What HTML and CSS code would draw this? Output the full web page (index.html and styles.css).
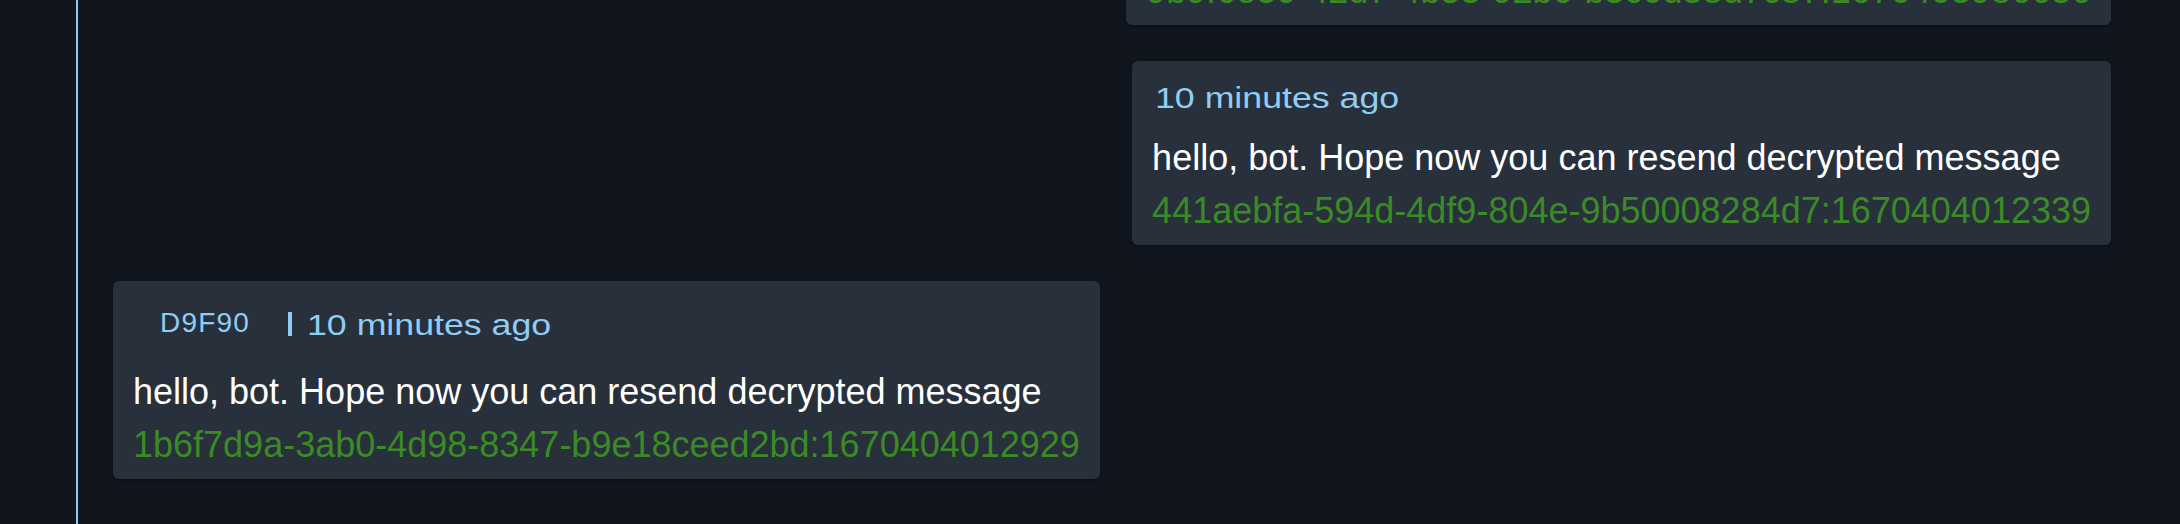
FILE: index.html
```html
<!DOCTYPE html>
<html lang="en">
<head>
<meta charset="utf-8">
<title>Chat</title>
<link rel="stylesheet" href="styles.css">
</head>
<body>
<main class="thread">
  <div class="msg msg-own">
    <div class="meta"><span class="time">10 minutes ago</span></div>
    <div class="text">hello, bot. Hope now you can resend decrypted message</div>
    <div class="hash">9b9f6e30-42d7-4b53-92b6-b5c0d38d7c87:1670403986636</div>
  </div>
  <div class="msg msg-own">
    <div class="meta"><span class="time">10 minutes ago</span></div>
    <div class="text">hello, bot. Hope now you can resend decrypted message</div>
    <div class="hash">441aebfa-594d-4df9-804e-9b50008284d7:1670404012339</div>
  </div>
  <div class="msg msg-other">
    <div class="meta meta-author">
      <span class="author">D9F90</span>
      <span class="sep" aria-hidden="true"></span>
      <span class="time">10 minutes ago</span>
    </div>
    <div class="text">hello, bot. Hope now you can resend decrypted message</div>
    <div class="hash">1b6f7d9a-3ab0-4d98-8347-b9e18ceed2bd:1670404012929</div>
  </div>
</main>
</body>
</html>
```

FILE: styles.css
```css
html, body {
  margin: 0;
  padding: 0;
  height: 100%;
  background: #11151e;
  overflow: hidden;
}

body {
  font-family: "Liberation Sans", Arial, sans-serif;
}

.thread {
  box-sizing: border-box;
  height: 100vh;
  margin-left: 76px;
  border-left: 2px solid #90cdf4;
  padding: 0 69px 45px 35px;
  display: flex;
  flex-direction: column;
  justify-content: flex-end;
  gap: 36px;
  overflow: hidden;
}

.msg {
  flex: none;
  width: fit-content;
  box-sizing: border-box;
  background: #28303c;
  border-radius: 6px;
  box-shadow: 0 1px 3px rgba(0, 0, 0, 0.35);
  padding: 19px 20px 14px 20px;
  white-space: nowrap;
}

.msg-own {
  align-self: flex-end;
}

.msg-other {
  align-self: flex-start;
}

.meta {
  display: flex;
  align-items: center;
  height: 35px;
  margin-bottom: 23px;
}

.meta-author {
  height: 49px;
}

.author {
  box-sizing: border-box;
  padding: 5px 0 9px 27px;
  font-size: 28px;
  line-height: 35px;
  letter-spacing: 1.2px;
  color: #90cdf4;
}

.sep {
  display: block;
  width: 4px;
  height: 24px;
  margin-left: 38px;
  margin-right: 12px;
  margin-top: -2px;
  background: #90cdf4;
}

.time {
  display: inline-block;
  margin-left: 3px;
  font-size: 30px;
  line-height: 35px;
  color: #90cdf4;
  transform: scaleX(1.19);
  transform-origin: left center;
}

.text {
  font-size: 36px;
  line-height: 40px;
  color: #ffffff;
  margin-bottom: 13px;
}

.hash {
  font-size: 36px;
  line-height: 40px;
  color: #3a8a26;
}
```
